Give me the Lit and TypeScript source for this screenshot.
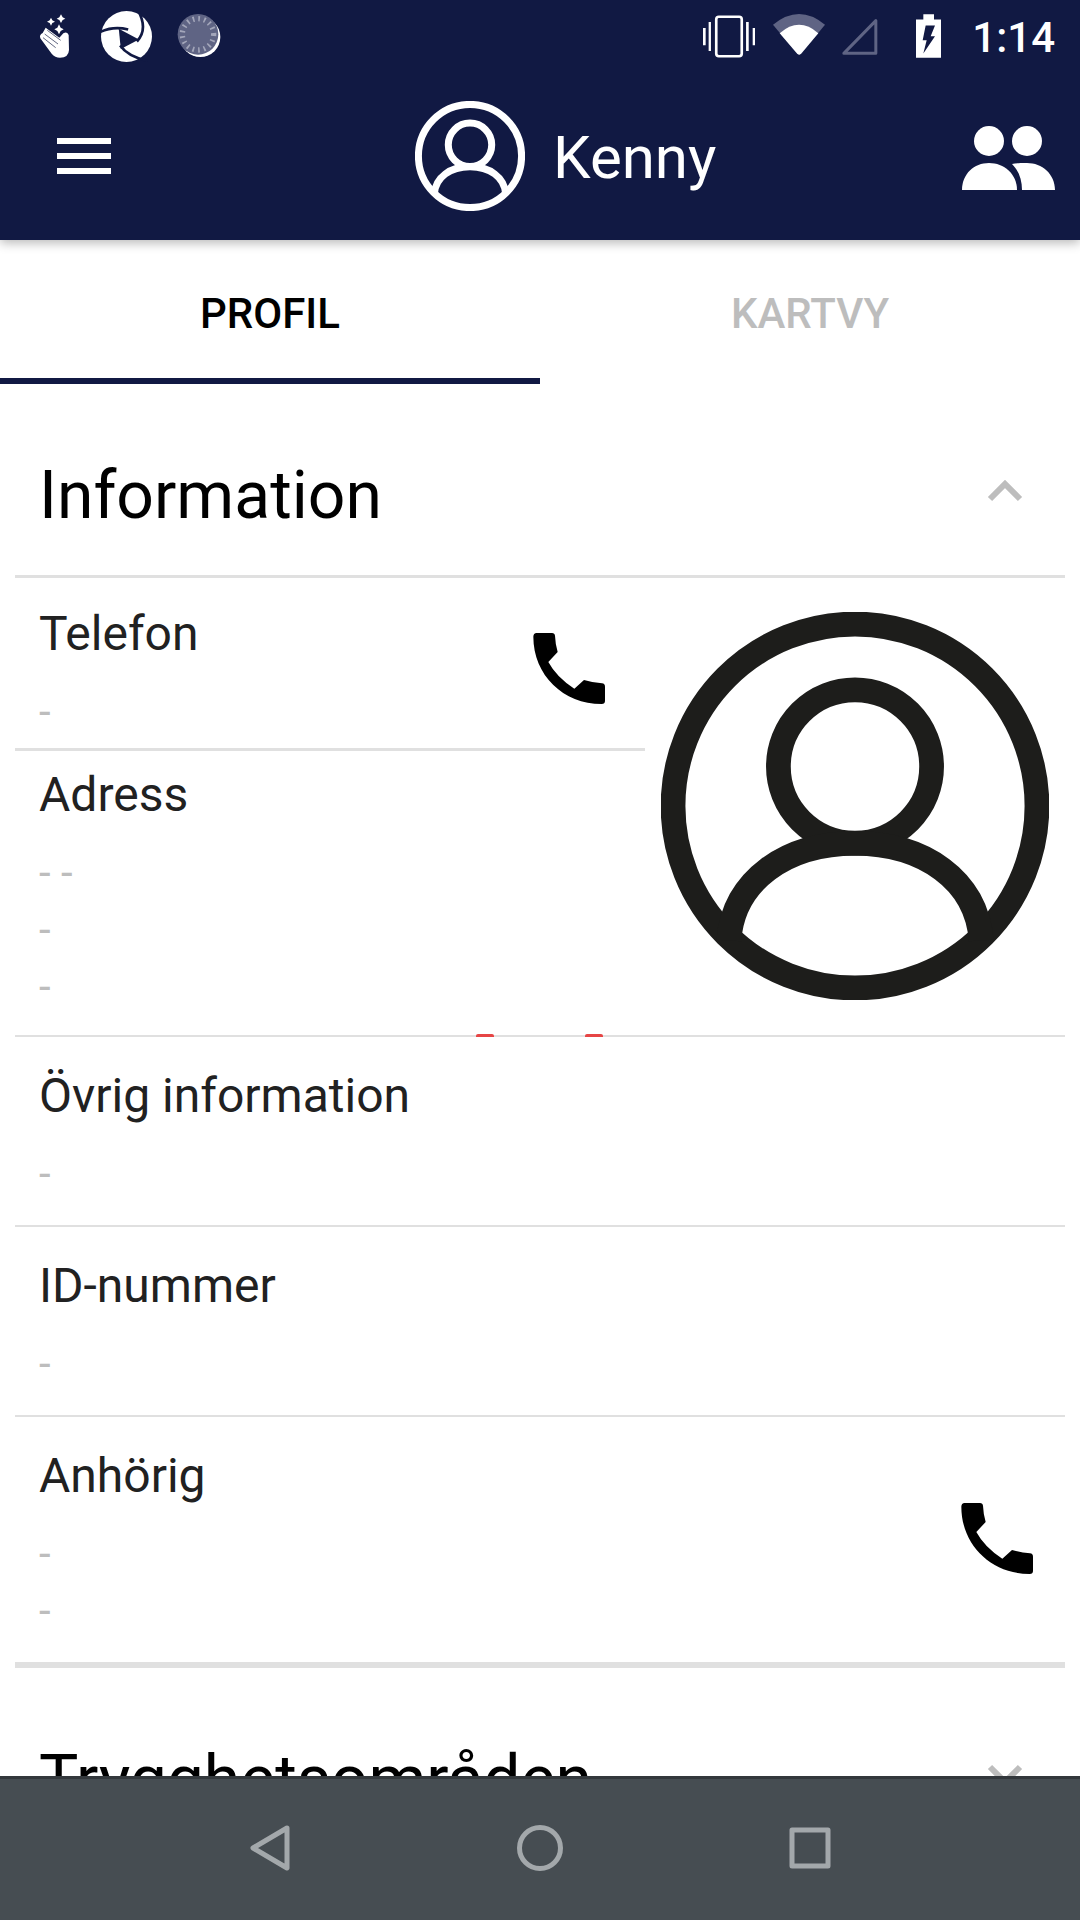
import { LitElement, html, css } from 'lit';
import { customElement } from 'lit/decorators.js';

const avatarIcon = (cls: string) => html`
  <svg class=${cls} viewBox="65 68 1160 1160" fill="none" stroke="currentColor" stroke-width="74">
    <circle cx="645" cy="648" r="544"></circle>
    <circle cx="645" cy="530" r="229"></circle>
    <path d="M268 1050C280 870 440 760 645 760C850 760 1010 870 1022 1050"></path>
  </svg>
`;

const phoneIcon = () => html`
  <svg class="phone" viewBox="0 0 300 300" fill="#000">
    <path d="M40 50Q40 40 50 39L96 39Q104 39 105 47Q106 72 113 96L85 126Q110 172 163 206L192 180Q218 188 246 190Q255 191 255 200L255 243Q255 252 245 252C130 252 40 165 40 50Z"></path>
  </svg>
`;

const chevron = (up: boolean) => html`
  <svg class="chevron" viewBox="0 0 36 22" fill="none" stroke="#bdbdbd" stroke-width="6">
    <polyline points=${up ? '3,19 18,4 33,19' : '3,3 18,18 33,3'}></polyline>
  </svg>
`;

@customElement('app-root')
export class AppRoot extends LitElement {
  static styles = css`
    :host {
      display: flex;
      flex-direction: column;
      width: 1080px;
      height: 1920px;
      overflow: hidden;
      background: #fff;
      font-family: Roboto, sans-serif;
    }
    .top {
      position: relative;
      z-index: 2;
      background: #111943;
      box-shadow: 0 3px 10px rgba(0, 0, 0, 0.28);
      color: #fff;
    }
    .status {
      display: flex;
      align-items: center;
      height: 72px;
      padding: 0 25px 0 38px;
    }
    .status svg { display: block; }
    .hand { width: 33px; height: 45px; }
    .logo { width: 51px; height: 51px; margin-left: 30px; }
    .spin { width: 44px; height: 44px; margin-left: 25px; filter: blur(0.6px); }
    .vibrate { width: 52px; height: 43px; margin-left: auto; }
    .wifi { width: 52px; height: 42px; margin-left: 18px; margin-bottom: 3px; }
    .signal { width: 36px; height: 36px; margin-left: 17px; margin-top: 2px; }
    .battery { width: 25px; height: 44px; margin-left: 38px; }
    .time {
      margin-left: 31px;
      font-size: 42px;
      font-weight: 500;
      line-height: 49px;
      margin-top: 2px;
    }
    .toolbar {
      display: flex;
      align-items: center;
      height: 168px;
      padding: 0 25px 0 57px;
    }
    .menu {
      display: flex;
      flex-direction: column;
      gap: 9px;
      width: 54px;
    }
    .menu span {
      display: block;
      height: 6px;
      background: #fff;
    }
    .user {
      display: flex;
      align-items: center;
      gap: 28px;
      margin-left: 304px;
    }
    .avatar-small { display: block; width: 110px; height: 110px; color: #fff; }
    .name { font-size: 60px; line-height: 70px; margin-top: 4px; }
    .people { display: block; width: 93px; height: 64px; margin-left: auto; margin-top: 4px; }
    .tabs { display: flex; height: 144px; }
    .tab {
      box-sizing: border-box;
      width: 540px;
      padding-top: 49px;
      text-align: center;
      font-size: 42px;
      font-weight: 500;
      line-height: 49px;
      color: #bdbdbd;
    }
    .tab.active {
      color: #000;
      border-bottom: 6px solid #111943;
    }
    .scroll {
      flex: 1;
      min-height: 0;
      overflow: hidden;
      padding: 0 15px;
    }
    .section-head {
      display: flex;
      justify-content: space-between;
      align-items: flex-start;
      padding: 75px 42px 42px 24px;
    }
    .section-head.open { border-bottom: 3px solid #e0e0e0; }
    .section-head h2 {
      margin: 0;
      font-size: 66px;
      font-weight: 400;
      line-height: 74px;
      color: #000;
    }
    .chevron { display: block; width: 36px; height: 22px; margin-top: 21px; }
    .list { position: relative; }
    .avatar-big {
      position: absolute;
      left: 646px;
      top: 34px;
      width: 388px;
      height: 388px;
      color: #1d1d1b;
    }
    .row {
      display: flex;
      justify-content: space-between;
      align-items: center;
      padding: 27px 17px 23px 24px;
      border-bottom: 2px solid #e0e0e0;
    }
    .row.tel {
      width: 630px;
      box-sizing: border-box;
      padding-top: 24px;
      padding-bottom: 8px;
      padding-right: 25px;
      border-bottom-width: 3px;
    }
    .row.adr {
      position: relative;
      padding-top: 12px;
      padding-bottom: 20px;
    }
    .row.last { border-bottom-width: 6px; }
    .label {
      font-size: 48px;
      line-height: 64px;
      color: #212121;
    }
    .lines {
      margin-top: 17px;
      font-size: 42px;
      line-height: 57px;
      color: #bdbdbd;
    }
    .phone { display: block; width: 100px; height: 100px; }
    .tel .phone { margin-top: -2px; }
    .last .phone { margin-top: -3px; }
    .pin {
      position: absolute;
      bottom: -2px;
      width: 18px;
      height: 3px;
      border-radius: 2px 2px 0 0;
      background: #e64545;
    }
    .nav {
      position: relative;
      z-index: 2;
      box-sizing: border-box;
      display: flex;
      justify-content: center;
      height: 144px;
      border-top: 3px solid #33383c;
      background: #464d52;
    }
    .slot {
      display: flex;
      justify-content: center;
      align-items: center;
      width: 270px;
      padding-bottom: 3px;
    }
    .back { width: 40px; height: 46px; }
    .home { width: 46px; height: 46px; }
    .recent { width: 42px; height: 42px; }
  `;

  private rows() {
    return html`
      <div class="row tel">
        <div>
          <div class="label">Telefon</div>
          <div class="lines">-</div>
        </div>
        ${phoneIcon()}
      </div>
      <div class="row adr">
        <div>
          <div class="label">Adress</div>
          <div class="lines">- -<br />-<br />-</div>
        </div>
        <span class="pin" style="left: 461px"></span>
        <span class="pin" style="left: 570px"></span>
      </div>
      <div class="row">
        <div>
          <div class="label">Övrig information</div>
          <div class="lines">-</div>
        </div>
      </div>
      <div class="row">
        <div>
          <div class="label">ID-nummer</div>
          <div class="lines">-</div>
        </div>
      </div>
      <div class="row last">
        <div>
          <div class="label">Anhörig</div>
          <div class="lines">-<br />-</div>
        </div>
        ${phoneIcon()}
      </div>
    `;
  }

  render() {
    return html`
      <div class="top">
        <div class="status">
          <svg class="hand" viewBox="24 27 99 135" fill="#fff">
            <path d="M93 28l5 9 8 4-8 4-5 9-5-9-8-4 8-4zM63 38l4 8 8 4-8 4-4 8-4-8-8-4 8-4zM87 58l5 10 9 5-9 5-5 10-5-10-9-5 9-5z"></path>
            <path d="M47 68L88 98L100 85Q112 78 116 90L117 135Q116 158 90 158Q75 158 65 146L31 100Q27 89 38 84Z"></path>
            <path d="M52 76L92 106M44 87L84 117M39 98L77 128" stroke="#111943" stroke-width="2" fill="none"></path>
          </svg>
          <svg class="logo" viewBox="211 15 152 152">
            <circle cx="287" cy="91" r="76" fill="#fff"></circle>
            <path d="M204 80Q245 58 292 70M322 14Q352 70 318 106M268 118Q290 150 350 164" fill="none" stroke="#111943" stroke-width="8"></path>
            <path d="M264 68L324 100L270 128Z" fill="#111943"></path>
          </svg>
          <svg class="spin" viewBox="440 28 132 132">
            <circle cx="510" cy="97" r="60" fill="#fff"></circle>
            <circle cx="503" cy="89" r="61" fill="#5f6484"></circle>
            <circle cx="503" cy="89" r="47" fill="none" stroke="#a3a6ba" stroke-width="16" stroke-dasharray="5 12"></circle>
          </svg>
          <svg class="vibrate" viewBox="38 30 157 127">
            <rect x="78" y="34" width="77" height="119" rx="8" fill="none" stroke="#fff" stroke-width="8"></rect>
            <path d="M55 50h7v87h-7zM38 68h8v52h-8zM168 50h8v87h-8zM188 68h7v52h-7z" fill="#fff"></path>
          </svg>
          <svg class="wifi" viewBox="250 28 155 125">
            <path d="M250 60Q328 -4 405 60L335 145Q328 153 321 145Z" fill="#5f6484"></path>
            <path d="M270 85Q328 35 385 85L335 145Q328 153 321 145Z" fill="#fff"></path>
          </svg>
          <svg class="signal" viewBox="455 42 107 108">
            <path d="M460 145L556 47V145Z" fill="none" stroke="#5f6484" stroke-width="9" stroke-linejoin="round"></path>
          </svg>
          <svg class="battery" viewBox="768 42 75 131">
            <path d="M790 42h32v16h21v115h-75V58h22z" fill="#fff"></path>
            <path d="M797 76h28l-13 32h13l-35 52 10-40h-12z" fill="#111943"></path>
          </svg>
          <span class="time">1:14</span>
        </div>
        <div class="toolbar">
          <div class="menu"><span></span><span></span><span></span></div>
          <div class="user">
            ${avatarIcon('avatar-small')}
            <span class="name">Kenny</span>
          </div>
          <svg class="people" viewBox="0 0 93 64" fill="#fff">
            <circle cx="27" cy="15" r="15"></circle>
            <circle cx="65" cy="15" r="15"></circle>
            <path d="M0 64C0 48 12 37 27 37C42 37 55 48 55 64Z"></path>
            <path d="M50 38C54 37 58 37 65 37C80 37 93 48 93 64H60C60 54 57 45 50 38Z"></path>
          </svg>
        </div>
      </div>
      <div class="tabs">
        <div class="tab active">PROFIL</div>
        <div class="tab">KARTVY</div>
      </div>
      <div class="scroll">
        <div class="section-head open">
          <h2>Information</h2>
          ${chevron(true)}
        </div>
        <div class="list">
          ${this.rows()}
          ${avatarIcon('avatar-big')}
        </div>
        <div class="section-head">
          <h2>Trygghetsområden</h2>
          ${chevron(false)}
        </div>
      </div>
      <div class="nav">
        <div class="slot">
          <svg class="back" viewBox="0 0 40 46" fill="none" stroke="#a3a8ab" stroke-width="5" stroke-linejoin="round">
            <path d="M37 3L3 23L37 43Z"></path>
          </svg>
        </div>
        <div class="slot">
          <svg class="home" viewBox="0 0 46 46" fill="none" stroke="#a3a8ab" stroke-width="5">
            <circle cx="23" cy="23" r="20.5"></circle>
          </svg>
        </div>
        <div class="slot">
          <svg class="recent" viewBox="0 0 42 42" fill="none" stroke="#a3a8ab" stroke-width="5" stroke-linejoin="round">
            <rect x="3" y="3" width="36" height="36"></rect>
          </svg>
        </div>
      </div>
    `;
  }
}
